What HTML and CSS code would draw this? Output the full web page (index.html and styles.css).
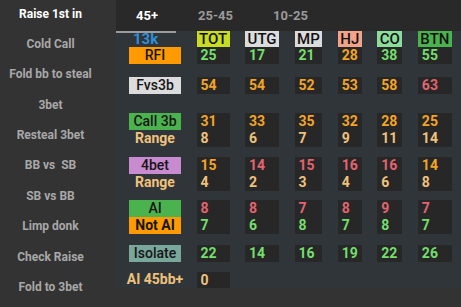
FILE: index.html
```html
<!DOCTYPE html>
<html>
<head>
<meta charset="utf-8">
<link rel="stylesheet" href="styles.css">
</head>
<body>
<div class="app">
  <nav class="sidebar">
    <div class="side-item active">Raise 1st in</div>
    <div class="side-item">Cold Call</div>
    <div class="side-item">Fold bb to steal</div>
    <div class="side-item">3bet</div>
    <div class="side-item">Resteal 3bet</div>
    <div class="side-item">BB vs&nbsp; SB</div>
    <div class="side-item">SB vs BB</div>
    <div class="side-item">Limp donk</div>
    <div class="side-item">Check Raise</div>
    <div class="side-item">Fold to 3bet</div>
  </nav>
  <main class="main">
    <div class="tabs">
      <div class="tab active">45+</div>
      <div class="tab">25-45</div>
      <div class="tab">10-25</div>
    </div>
    <div class="panel">
      <div class="grid">
        <!-- row 1 -->
        <div class="lab"><div class="count">13k</div><div class="box c-orange">RFI</div></div>
        <div class="col"><div class="hdr c-tot">TOT</div><div class="nums"><div class="g">25</div></div></div>
        <div class="col"><div class="hdr c-grey">UTG</div><div class="nums"><div class="g">17</div></div></div>
        <div class="col"><div class="hdr c-grey">MP</div><div class="nums"><div class="g">21</div></div></div>
        <div class="col"><div class="hdr c-salmon">HJ</div><div class="nums"><div class="o">28</div></div></div>
        <div class="col"><div class="hdr c-lgreen">CO</div><div class="nums"><div class="g">38</div></div></div>
        <div class="col"><div class="hdr c-green">BTN</div><div class="nums"><div class="g">55</div></div></div>

        <!-- row 2 -->
        <div class="lab"><div class="box c-grey">Fvs3b</div></div>
        <div class="col nums"><div class="o">54</div></div>
        <div class="col nums"><div class="o">54</div></div>
        <div class="col nums"><div class="o">52</div></div>
        <div class="col nums"><div class="o">53</div></div>
        <div class="col nums"><div class="o">58</div></div>
        <div class="col nums"><div class="r">63</div></div>

        <!-- row 3 -->
        <div class="lab"><div class="box c-green">Call 3b</div><div class="sub">Range</div></div>
        <div class="col nums"><div class="o">31</div><div class="t">8</div></div>
        <div class="col nums"><div class="o">33</div><div class="t">6</div></div>
        <div class="col nums"><div class="o">35</div><div class="t">7</div></div>
        <div class="col nums"><div class="o">32</div><div class="t">9</div></div>
        <div class="col nums"><div class="o">28</div><div class="t">11</div></div>
        <div class="col nums"><div class="o">25</div><div class="t">14</div></div>

        <!-- row 4 -->
        <div class="lab"><div class="box c-purple">4bet</div><div class="sub">Range</div></div>
        <div class="col nums"><div class="o">15</div><div class="t">4</div></div>
        <div class="col nums"><div class="r">14</div><div class="t">2</div></div>
        <div class="col nums"><div class="r">15</div><div class="t">3</div></div>
        <div class="col nums"><div class="r">16</div><div class="t">4</div></div>
        <div class="col nums"><div class="r">16</div><div class="t">6</div></div>
        <div class="col nums"><div class="o">14</div><div class="t">8</div></div>

        <!-- row 5 -->
        <div class="lab"><div class="box c-green">AI</div><div class="box c-orange bold">Not AI</div></div>
        <div class="col nums"><div class="r">8</div><div class="g">7</div></div>
        <div class="col nums"><div class="r">8</div><div class="g">6</div></div>
        <div class="col nums"><div class="r">7</div><div class="g">8</div></div>
        <div class="col nums"><div class="r">8</div><div class="g">7</div></div>
        <div class="col nums"><div class="r">9</div><div class="g">8</div></div>
        <div class="col nums"><div class="r">7</div><div class="g">7</div></div>

        <!-- row 6 -->
        <div class="lab"><div class="box c-teal">Isolate</div></div>
        <div class="col nums"><div class="g">22</div></div>
        <div class="col nums"><div class="g">14</div></div>
        <div class="col nums"><div class="g">16</div></div>
        <div class="col nums"><div class="g">19</div></div>
        <div class="col nums"><div class="g">22</div></div>
        <div class="col nums"><div class="g">26</div></div>

        <!-- row 7 -->
        <div class="lab"><div class="sub">AI 45bb+</div></div>
        <div class="col nums short"><div class="t">0</div></div>
      </div>
    </div>
  </main>
</div>
</body>
</html>
```

FILE: styles.css
```css
* { box-sizing: border-box; }
html, body {
  margin: 0;
  padding: 0;
  background: #333333;
  font-family: Roboto, "Noto Sans", "Liberation Sans", sans-serif;
  width: 461px;
  height: 307px;
  overflow: hidden;
}
.app {
  display: flex;
  width: 461px;
  height: 307px;
}
.sidebar {
  width: 116px;
  flex: none;
  display: flex;
  flex-direction: column;
  padding-right: 15px;
  background: #333333;
}
.side-item {
  height: 30.4px;
  line-height: 30.4px;
  text-align: center;
  font-size: 12px;
  font-weight: 700;
  color: #a8a8a8;
  white-space: nowrap;
}
.side-item:first-child { margin-top: -1.5px; }
.side-item.active { color: #ffffff; }

.main {
  flex: 1;
  display: flex;
  flex-direction: column;
}
.tabs {
  height: 31px;
  display: flex;
  background: #292929;
}
.tab {
  position: relative;
  padding: 0 20px;
  line-height: 31px;
  font-size: 13px;
  font-weight: 700;
  color: #9a9a9a;
}
.tab.active { color: #ffffff; }
.tab.active::after {
  content: "";
  position: absolute;
  left: 0;
  right: 2px;
  bottom: -2px;
  height: 2px;
  background: #9b9b9b;
  z-index: 1;
}
.panel {
  background: #2f3538;
  height: 257px;
  padding-left: 13px;
}
.grid {
  display: grid;
  grid-template-columns: 52px repeat(6, auto);
  grid-template-rows: 33px 30px 53px 44px 43px 28px 26px;
  column-gap: 15.5px;
  justify-content: start;
}
.lab, .col { align-self: end; }
.lab { display: flex; flex-direction: column; }
.count {
  height: 16px;
  line-height: 16px;
  padding-left: 4px;
  font-size: 15px;
  font-weight: 700;
  color: #2f8fd8;
}
.box {
  height: 17px;
  line-height: 17px;
  display: flex;
  justify-content: center;
  font-size: 14px;
  font-weight: 500;
  color: #151515;
  white-space: nowrap;
}
.box.bold { font-weight: 700; }
.sub {
  height: 17px;
  line-height: 17px;
  display: flex;
  justify-content: center;
  font-size: 14px;
  font-weight: 700;
  color: #efc27c;
  white-space: nowrap;
}
.hdr {
  height: 16px;
  line-height: 16px;
  padding: 0 2.5px;
  font-size: 15px;
  font-weight: 500;
  color: #111111;
  white-space: nowrap;
}
.nums {
  background: #272727;
  padding-left: 4px;
  font-size: 14px;
  font-weight: 700;
}
.nums > div { height: 17px; line-height: 17px; }
.nums.short > div { height: 16px; line-height: 16px; }

.c-orange { background: #ff9a00; }
.c-tot { background: #c9dc20; }
.c-grey { background: #dcdcdc; }
.c-salmon { background: #f3a38a; }
.c-lgreen { background: #8cdc9c; }
.c-green { background: #4bb34e; }
.c-purple { background: #c98bcf; }
.c-teal { background: #79a79a; }

.g { color: #74df6c; }
.o { color: #f4a425; }
.t { color: #efc27c; }
.r { color: #e2646f; }
```
